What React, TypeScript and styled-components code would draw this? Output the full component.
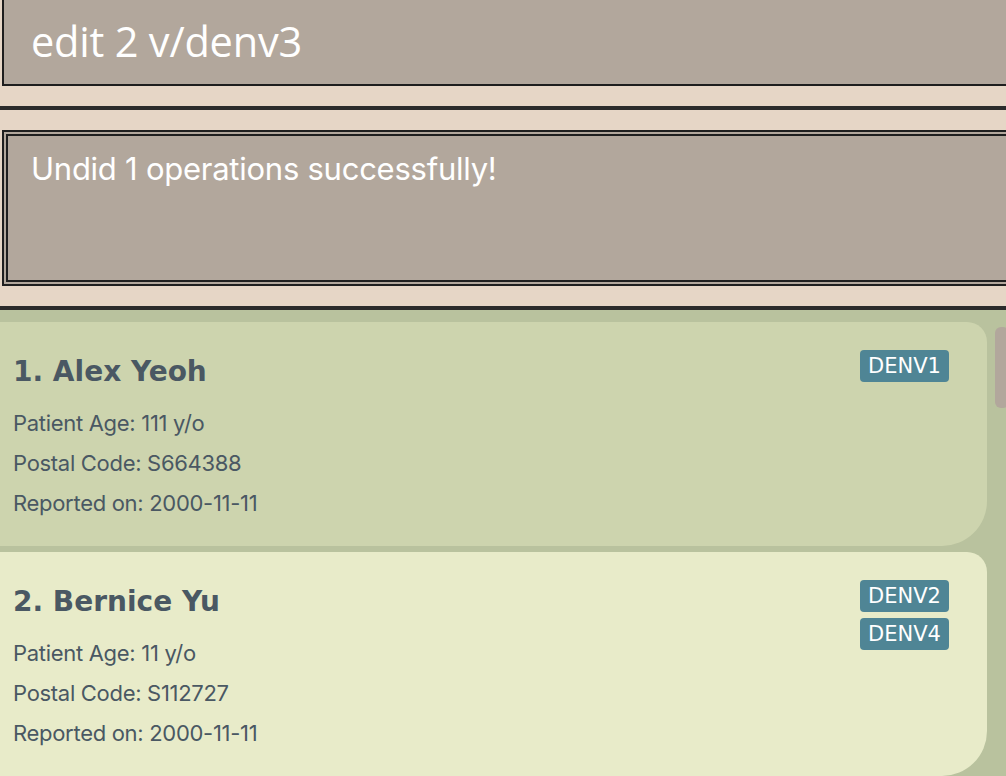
import React from "react";
import styled, { createGlobalStyle } from "styled-components";

const Global = createGlobalStyle`
  html, body { margin: 0; padding: 0; }
  body { background: #e6d6c6; overflow: hidden; }
`;

const Page = styled.div`
  width: 1006px;
  height: 776px;
  overflow: hidden;
  background: #e6d6c6;
  display: flex;
  flex-direction: column;
`;

const CommandBox = styled.div`
  flex: none;
  margin: -4px 0 0 2px;
  width: 1040px;
  height: 90px;
  box-sizing: border-box;
  border: 2px solid #1e1e1e;
  background: #b2a79c;
  display: flex;
  align-items: center;
  padding: 0 0 0 27px;
  color: #ffffff;
  font-family: "Open Sans", sans-serif;
  font-size: 41.5px;
  letter-spacing: -0.2px;
`;

const Divider = styled.div<{ $top: number }>`
  flex: none;
  height: 4px;
  margin-top: ${(p) => p.$top}px;
  background: #2b2b2b;
`;

const ResultBox = styled.div`
  flex: none;
  margin: 20px 0 20px 2px;
  width: 1040px;
  height: 156px;
  box-sizing: border-box;
  border: 6px double #1f1f1f;
  background: #b2a79c;
  padding: 14px 0 0 23px;
  color: #ffffff;
  font-family: "Inter", sans-serif;
  font-size: 31px;
  letter-spacing: -0.25px;
`;

const ListArea = styled.div`
  flex: 1;
  background: #b9c29e;
  display: flex;
  padding-top: 12px;
  overflow: hidden;
`;

const Cards = styled.div`
  flex: none;
  width: 1007px;
  margin-left: -20px;
  display: flex;
  flex-direction: column;
  gap: 6px;
`;

const Card = styled.div<{ $bg: string }>`
  flex: none;
  height: 224px;
  box-sizing: border-box;
  background: ${(p) => p.$bg};
  border-radius: 20px 20px 45px 20px;
  padding: 32px 38px 0 33px;
  display: flex;
  justify-content: space-between;
  color: #4a5863;
`;

const Info = styled.div`
  display: flex;
  flex-direction: column;
`;

const Name = styled.div`
  font-family: "DejaVu Sans", sans-serif;
  font-weight: bold;
  font-size: 28px;
  line-height: 36px;
  margin-bottom: 13px;
`;

const Detail = styled.div`
  font-family: "Inter", sans-serif;
  font-size: 22px;
  letter-spacing: -0.3px;
  line-height: 40px;
`;

const Tags = styled.div`
  display: flex;
  flex-direction: column;
  gap: 6px;
  margin-top: -4px;
`;

const Tag = styled.div`
  width: 89px;
  height: 32px;
  box-sizing: border-box;
  border-radius: 4px;
  background: #4f8595;
  color: #ffffff;
  font-family: "DejaVu Sans", sans-serif;
  font-size: 21px;
  display: flex;
  align-items: center;
  justify-content: center;
`;

const Scrollbar = styled.div`
  flex: none;
  margin: 5px 0 0 8px;
  width: 14px;
  height: 81px;
  border-radius: 6px;
  background: #b2a79c;
`;

type Person = {
  name: string;
  age: string;
  postal: string;
  date: string;
  tags: string[];
  bg: string;
};

const people: Person[] = [
  { name: "1. Alex Yeoh", age: "111", postal: "S664388", date: "2000-11-11", tags: ["DENV1"], bg: "#cdd4ae" },
  { name: "2. Bernice Yu", age: "11", postal: "S112727", date: "2000-11-11", tags: ["DENV2", "DENV4"], bg: "#e8ebc9" },
];

export default function App() {
  return (
    <>
      <Global />
      <Page>
        <CommandBox>edit 2 v/denv3</CommandBox>
        <Divider $top={20} />
        <ResultBox>Undid 1 operations successfully!</ResultBox>
        <Divider $top={0} />
        <ListArea>
          <Cards>
            {people.map((p) => (
              <Card key={p.name} $bg={p.bg}>
                <Info>
                  <Name>{p.name}</Name>
                  <Detail>Patient Age: {p.age} y/o</Detail>
                  <Detail>Postal Code: {p.postal}</Detail>
                  <Detail>Reported on: {p.date}</Detail>
                </Info>
                <Tags>
                  {p.tags.map((t) => (
                    <Tag key={t}>{t}</Tag>
                  ))}
                </Tags>
              </Card>
            ))}
          </Cards>
          <Scrollbar />
        </ListArea>
      </Page>
    </>
  );
}
